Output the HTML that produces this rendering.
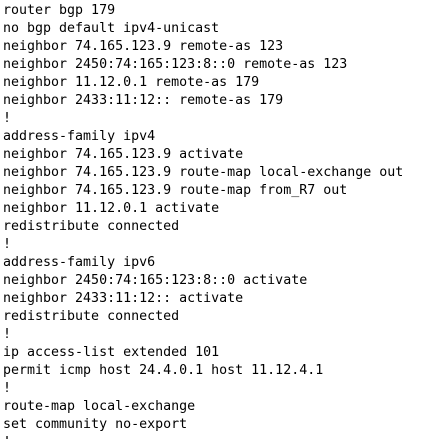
<!DOCTYPE html>
<html><head><meta charset="utf-8"><style>
html,body{margin:0;padding:0;background:#fff;width:448px;height:439px;overflow:hidden}
pre{margin:0;padding:2px 0 0 3px;font-family:"DejaVu Sans Mono",monospace;font-size:13.3px;line-height:18px;color:#000}
</style></head><body><pre>router bgp 179
no bgp default ipv4-unicast
neighbor 74.165.123.9 remote-as 123
neighbor 2450:74:165:123:8::0 remote-as 123
neighbor 11.12.0.1 remote-as 179
neighbor 2433:11:12:: remote-as 179
!
address-family ipv4
neighbor 74.165.123.9 activate
neighbor 74.165.123.9 route-map local-exchange out
neighbor 74.165.123.9 route-map from_R7 out
neighbor 11.12.0.1 activate
redistribute connected
!
address-family ipv6
neighbor 2450:74:165:123:8::0 activate
neighbor 2433:11:12:: activate
redistribute connected
!
ip access-list extended 101
permit icmp host 24.4.0.1 host 11.12.4.1
!
route-map local-exchange
set community no-export
!</pre></body></html>
